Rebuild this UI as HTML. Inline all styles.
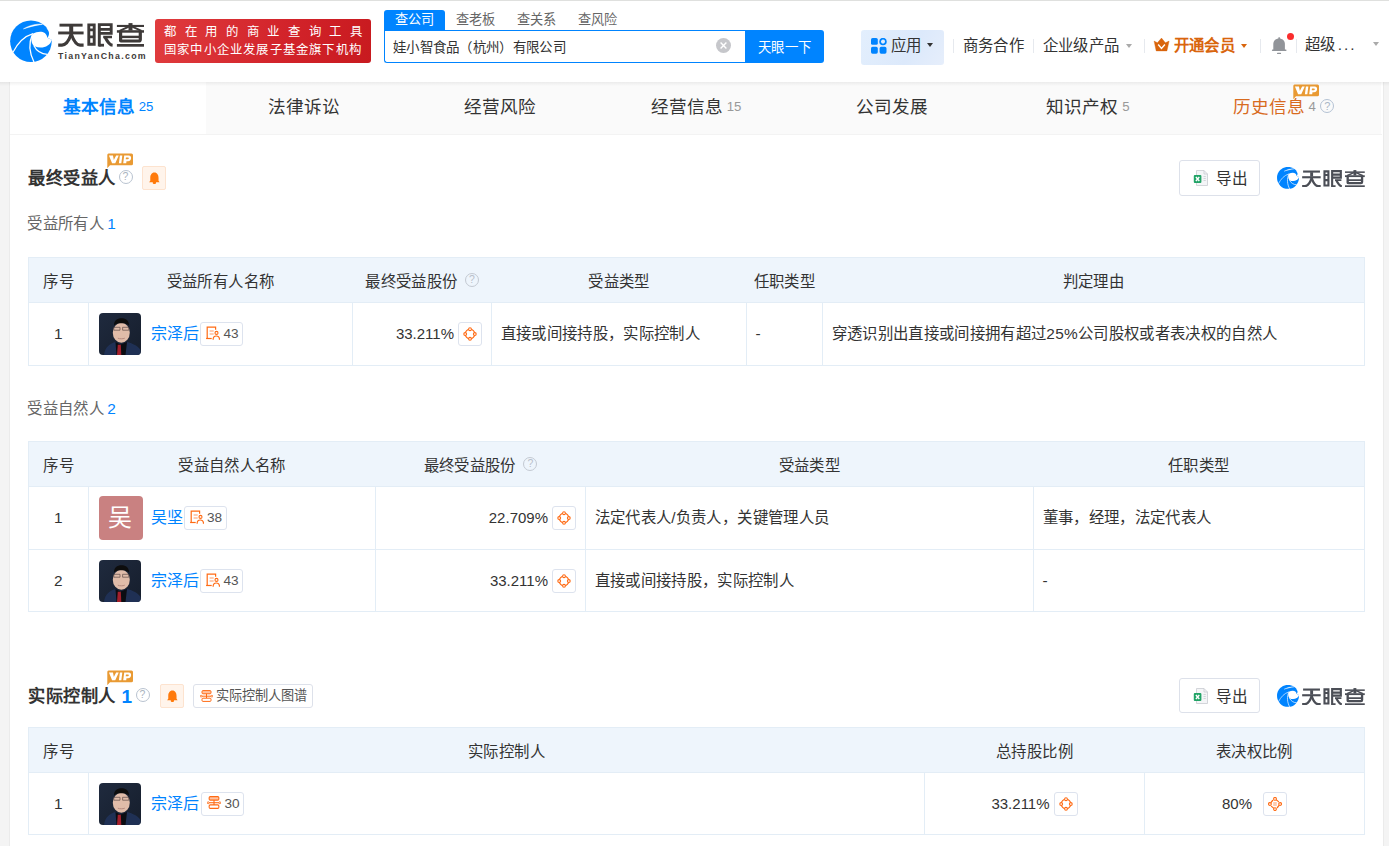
<!DOCTYPE html>
<html lang="zh-CN"><head><meta charset="utf-8">
<style>
*{box-sizing:border-box;margin:0;padding:0}
html,body{width:1389px;height:846px;overflow:hidden}
body{background:#f4f4f4;font-family:"Liberation Sans",sans-serif;color:#333;position:relative}
.abs{position:absolute}
#hdr{position:absolute;left:0;top:0;width:1389px;height:82px;background:#fff;box-shadow:inset 0 1px 0 #dfe0de}
#hshadow{position:absolute;left:0;top:82px;width:1389px;height:4px;z-index:5;background:linear-gradient(rgba(0,0,0,0.06),rgba(0,0,0,0))}
.banner{position:absolute;left:155px;top:19px;width:216px;height:44px;border-radius:3px;background:linear-gradient(100deg,#e03c3e,#d2232a 60%,#c81a1f);color:#fff;font-size:13.2px;line-height:18px}
.banner .l1{position:absolute;left:9px;top:3.5px;width:198px;text-align:justify;text-align-last:justify;white-space:nowrap;letter-spacing:0;font-size:12.4px;font-weight:500}
.banner .l2{position:absolute;left:9px;top:21.8px;width:210px;white-space:nowrap;font-size:12.4px;letter-spacing:1.2px}
.stabs{position:absolute;left:384px;top:10px;height:20px;font-size:13.2px;line-height:20px;color:#666}
.stabs > span{position:absolute;top:0;width:61px;text-align:center;white-space:nowrap}
.stabs .on{background:#0084ff;color:#fff;border-radius:3px 3px 0 0}
.sinput{position:absolute;left:384px;top:30px;width:362px;height:33px;border:1px solid #0084ff;border-radius:0 0 0 3px;border-right:none;background:#fff;font-size:13.5px;letter-spacing:0.3px;line-height:33px;padding-left:8px;color:#333}
.sbtn{position:absolute;left:745px;top:30px;width:79px;height:33px;background:#0084ff;border-radius:0 3px 3px 0;color:#fff;font-size:13.4px;letter-spacing:0.3px;line-height:35px;text-align:center}
.clr{position:absolute;left:716px;top:38px;width:15px;height:15px;border-radius:50%;background:#c6c7cb}
.nav{position:absolute;top:28px;height:35px;font-size:15.4px;letter-spacing:0.4px;line-height:35px;color:#333;white-space:nowrap}
.sep{position:absolute;top:39.3px;width:1px;height:13.5px;background:#e6e9ee}
.caret{position:absolute;width:0;height:0;border-left:3.5px solid transparent;border-right:3.5px solid transparent;border-top:4px solid #999}
#wrap{position:absolute;left:10px;top:82px;width:1373px;height:764px;background:#fff;box-shadow:-1px 0 0 #ebebeb,1px 0 0 #ebebeb}
.tab{position:absolute;top:0;width:196px;height:52px;background:#fafafa;text-align:center;font-size:17.6px;line-height:50px;color:#333;white-space:nowrap}
.tab.on{background:#fff;color:#0084ff;font-weight:bold}
.tab .n{font-size:13.2px;color:#999;font-weight:normal;margin-left:4px;vertical-align:2px}
.tab.on .n{color:#0084ff}
.tabline{position:absolute;left:0;top:52px;width:1372px;height:1px;background:#f3f3f3}
.title{position:absolute;letter-spacing:0.6px;font-size:17.2px;font-weight:bold;color:#333;line-height:24px;white-space:nowrap}
.sub{position:absolute;font-size:15.4px;letter-spacing:0.4px;color:#666;line-height:20px;white-space:nowrap}
.sub b{font-weight:normal;color:#0084ff}
.qm{position:absolute;width:14px;height:14px;border:1.2px solid #b9c3d0;border-radius:50%;font-size:10.5px;line-height:11.6px;text-align:center;color:#aab3c0}
.bellbtn{position:absolute;width:24px;height:24px;background:#fff4eb;border:1px solid #fde3cf;border-radius:2px}
.vip{position:absolute;width:26px;height:15px}
.export{position:absolute;left:1179px;width:81px;height:36px;border:1px solid #dde1ea;border-radius:3px;background:#fff;font-size:15.4px;line-height:34px;color:#333}
.export > span{position:absolute;left:35.5px;top:0.5px;font-size:15.6px}
.export svg{position:absolute;left:13px;top:9px}
.logo2{position:absolute;left:1276px;width:90px;height:24px}
table{position:absolute;left:28px;border-collapse:collapse;table-layout:fixed;font-size:15.4px;letter-spacing:0.34px;color:#333}
th{background:#eef5fc;font-weight:normal;height:45px;border-top:1px solid #e3edf6;border-bottom:1px solid #e3edf6;text-align:center;padding:0;white-space:nowrap}
th:first-child{border-left:1px solid #e3edf6}
th:last-child{border-right:1px solid #e3edf6}
td{border:1px solid #e3edf6;line-height:20px;padding:0 10px 0 8.5px;height:62px;white-space:nowrap;position:relative}
td.c{text-align:center;padding:0}
td.r{text-align:right;padding-right:9px}
.ava{margin-left:1.5px;display:inline-block;vertical-align:middle;width:42px;height:42px;border-radius:4px;overflow:hidden}
.ava svg{display:block}
.nm{color:#0084ff;vertical-align:middle;margin-left:10px;font-size:16px;letter-spacing:0}
.ava.w{margin-left:1px}
.ava.w+.nm{margin-left:8px}
.bdg{display:inline-block;vertical-align:middle;height:24px;border:1px solid #dde3ee;border-radius:3px;padding:0 3.5px 0 5px;font-size:13.6px;line-height:22px;color:#555;margin-left:1px;letter-spacing:0}
.bdg svg{vertical-align:-2px;margin-right:3.5px}
.ib{display:inline-block;vertical-align:middle;width:24px;height:24px;border:1px solid #dde3ee;border-radius:3px;margin-left:4px;position:relative}
.ib svg{position:absolute;left:4px;top:4px}
.jw{display:inline-block;white-space:nowrap;text-align:justify;text-align-last:justify;text-indent:0}
.pct{vertical-align:middle;font-size:15px;letter-spacing:0}
.qmi{display:inline-block;width:14px;height:14px;border:1.3px solid #c3c9d2;border-radius:50%;font-size:10.5px;line-height:11.5px;text-align:center;color:#b9c0ca;vertical-align:3.6px;margin-left:3px;letter-spacing:0}
</style></head>
<body>
<div id="hdr">
  <!-- logo icon -->
  <svg class="abs" style="left:6px;top:16.4px" width="50" height="50" viewBox="0 0 846 846">
    <defs><symbol id="lg" viewBox="0 0 846 846">
    <circle cx="422" cy="428" r="352" fill="#0084ff"></circle>
    <path d="M450 300 C550 250 680 245 700 368 C720 380 750 392 778 400 C740 520 610 560 482 512 C425 470 415 380 450 300 Z" fill="#fff"></path>
    <path d="M700 368 C740 320 740 255 685 210 L820 180 L820 400 L778 400 C750 392 720 380 700 368 Z" fill="#fff"></path>
    <path d="M118 615 C190 470 300 345 458 298" stroke="#fff" stroke-width="20" fill="none"></path>
    <path d="M445 318 C385 450 390 620 478 790" stroke="#fff" stroke-width="22" fill="none"></path>
    <path d="M470 500 C520 600 600 645 700 650" stroke="#fff" stroke-width="22" fill="none"></path>
    <path d="M295 218 C390 160 510 128 618 142 C520 150 400 185 295 218 Z" fill="#fff" stroke="#fff" stroke-width="8"></path>
    </symbol></defs>
    <use href="#lg" width="846" height="846"></use>
  </svg>
  <!-- logo text -->
  <svg class="abs" style="left:58px;top:23px" width="87" height="24" viewBox="58 23 87 24"><use href="#lt" x="58" y="23" width="87" height="24" style="color:#3e3a39"></use></svg>
  <div class="abs" style="left:58px;top:51px;width:90px;font-size:8.8px;font-weight:bold;color:#3e3a39;letter-spacing:1.3px;line-height:10px;white-space:nowrap">TianYanCha.com</div>
  <div class="banner"><div class="l1"><span class="jw" style="width: 198px;">都在用的商业查询工具</span></div><div class="l2"><span class="jw" style="width: 198px;">国家中小企业发展子基金旗下机构</span></div></div>
  <div class="stabs"><span class="on" style="left:0"><span class="jw" style="width: 39px;">查公司</span></span><span style="left:61px"><span class="jw" style="width: 39px;">查老板</span></span><span style="left:122px"><span class="jw" style="width: 39px;">查关系</span></span><span style="left:183px"><span class="jw" style="width: 39px;">查风险</span></span></div>
  <div class="sinput"><span class="jw" style="width: 172.91px;">娃小智食品（杭州）有限公司</span></div>
  <div class="clr"><svg width="15" height="15" viewBox="0 0 15 15"><path d="M4.6 4.6 L10.4 10.4 M10.4 4.6 L4.6 10.4" stroke="#fff" stroke-width="1.4"></path></svg></div>
  <div class="sbtn"><span class="jw" style="width: 53.2px;">天眼一下</span></div>
  <!-- right nav -->
  <div class="abs" style="left:861px;top:29.5px;width:83px;height:35px;border-radius:3px;background:linear-gradient(120deg,#e3effd,#dce9fb 60%,#e6eefb)"></div>
  <svg class="abs" style="left:870.5px;top:38px" width="16" height="16" viewBox="0 0 16 16">
    <rect x="0" y="0" width="6.8" height="6.8" rx="1.6" fill="#0084ff"></rect>
    <circle cx="12" cy="3.6" r="2.9" fill="none" stroke="#0084ff" stroke-width="1.7"></circle>
    <rect x="0" y="8.8" width="6.8" height="6.9" rx="1.6" fill="#0084ff"></rect>
    <rect x="8.6" y="8.8" width="6.9" height="6.9" rx="1.6" fill="#0084ff"></rect>
  </svg>
  <div class="nav" style="left:891px"><span class="jw" style="width: 30.81px;">应用</span></div>
  <div class="caret" style="left:927.3px;top:43.2px;border-top-color:#333"></div>
  <div class="sep" style="left:953px"></div>
  <div class="nav" style="left:962.5px"><span class="jw" style="width: 61.61px;">商务合作</span></div>
  <div class="sep" style="left:1033px"></div>
  <div class="nav" style="left:1042.5px"><span class="jw" style="width: 77px;">企业级产品</span></div>
  <div class="caret" style="left:1125.5px;top:44px;border-top-color:#aaa"></div>
  <div class="sep" style="left:1144px"></div>
  <svg class="abs" style="left:1153px;top:38px" width="17" height="14" viewBox="0 0 17 14">
    <path d="M1.1 3.1 L4.4 4.8 L8.5 0.1 L12.4 4.8 L16.1 3.1 L13.9 12.9 H3.2 Z" fill="#d9650d" stroke="#d9650d" stroke-width="0.4" stroke-linejoin="round"></path>
    <path d="M5.2 6.5 L8.5 10.5 L11.9 6.5" stroke="#fff" stroke-width="1.4" fill="none"></path>
  </svg>
  <div class="nav" style="left:1173.5px;color:#d9650d;font-weight:bold"><span class="jw" style="width: 61.61px;">开通会员</span></div>
  <div class="caret" style="left:1240.5px;top:44px;border-top-color:#d9650d"></div>
  <div class="sep" style="left:1260px"></div>
  <svg class="abs" style="left:1271px;top:37px" width="16" height="17" viewBox="0 0 16 17">
    <rect x="7.3" y="0.2" width="1.8" height="2" rx="0.6" fill="#919499"></rect>
    <path d="M2.3 13 V7 C2.3 3.7 4.9 1.6 8.1 1.6 C11.3 1.6 13.9 3.7 13.9 7 V13 Z" fill="#919499"></path>
    <rect x="0.9" y="12.6" width="14.6" height="1.3" rx="0.6" fill="#919499"></rect>
    <rect x="6" y="15.8" width="4.1" height="1.2" rx="0.6" fill="#919499"></rect>
  </svg>
  <div class="abs" style="left:1286.8px;top:32.6px;width:7.5px;height:7.5px;border-radius:50%;background:#fa2d2d"></div>
  <div class="sep" style="left:1296px"></div>
  <div class="nav" style="left:1305px;top:27px"><span class="jw" style="width: 30.81px;">超级</span><span style="letter-spacing:2px;margin-left:2px">...</span></div>
  <div class="caret" style="left:1373px;top:42px;border-top-color:#aaa"></div>
</div>
<div id="hshadow"></div>

<div id="wrap">
  <div class="tab on" style="left:0"><span class="jw" style="width: 72px;">基本信息</span><span class="n">25</span></div>
  <div class="tab" style="left:196px"><span class="jw" style="width: 72px;">法律诉讼</span></div>
  <div class="tab" style="left:392px"><span class="jw" style="width: 72px;">经营风险</span></div>
  <div class="tab" style="left:588px"><span class="jw" style="width: 72px;">经营信息</span><span class="n">15</span></div>
  <div class="tab" style="left:784px"><span class="jw" style="width: 72px;">公司发展</span></div>
  <div class="tab" style="left:980px"><span class="jw" style="width: 72px;">知识产权</span><span class="n">5</span></div>
  <div class="tab" style="left:1176px;width:195px;color:#d86b1f"><span class="jw" style="width: 72px;">历史信息</span><span class="n">4</span><span class="qmi" style="vertical-align:3px;margin-left:4.5px;width:14px;height:14px;line-height:12px;font-size:11px;border-color:#b4c2d4;color:#a9b6c6">?</span></div><svg class="vip" style="left:1283px;top:1.5px" width="27" height="15"><use href="#vip"></use></svg>
  <div class="tabline"></div>
</div>

<!-- Section 1 -->
<svg width="0" height="0" style="position:absolute">
  <defs>
    <symbol id="ph" viewBox="0 0 42 42">
      <rect width="42" height="42" fill="url(#phg)"></rect>
      <path d="M5 42 C6 34.5 10 31 16.5 29 L21.5 31 L28 29 C34 30.5 39 33 41.5 37 V42 Z" fill="#1f3054"></path>
      <path d="M16.5 29 L21.5 31.5 L28 29 L26.5 42 H17.5 Z" fill="#0b0d12"></path>
      <path d="M18.8 31.8 L21.8 31.8 L22.3 42 H18 Z" fill="#a41f2c"></path>
      <ellipse cx="22.3" cy="19.8" rx="8.5" ry="10" fill="#e0bca9"></ellipse>
      <path d="M15 12.5 C15 7.5 18 5.3 22.5 5.3 C27 5.3 30 7.5 30 12.5 C28.5 10.8 26 10.2 22.5 10.2 C19 10.2 16.5 10.8 15 12.5 Z" fill="#0d0d0d"></path>
      <path d="M14.8 14.3 H21 V17.2 H14.8 Z M23.6 14.3 H29.8 V17.2 H23.6 Z" fill="none" stroke="#5e4c48" stroke-width="0.7"></path>
      <path d="M18.8 25.2 C21 26 23.6 26 25.8 25.2" stroke="#b0857a" stroke-width="0.9" fill="none"></path>
    </symbol>
    <linearGradient id="phg" x1="0" y1="0" x2="1" y2="1"><stop offset="0" stop-color="#1f2a3e"></stop><stop offset="1" stop-color="#161e2c"></stop></linearGradient>
    <symbol id="pi" viewBox="0 0 14 14">
      <path d="M1.2 12.5 V1.1 H9.6 V3.7" stroke="#ff6a13" stroke-width="1.2" fill="none"></path>
      <path d="M0.1 12.5 H5.7" stroke="#ff6a13" stroke-width="1.2"></path>
      <path d="M3.6 5 H7.7 M3.6 8 H7.7" stroke="#ff9a66" stroke-width="1.1"></path>
      <circle cx="10.5" cy="6.9" r="1.5" fill="none" stroke="#ff6a13" stroke-width="1.1"></circle>
      <path d="M7.1 13.8 C7.1 10.9 8.6 10 10.3 10 C12.1 10 13.5 10.9 13.5 13.8" stroke="#ff6a13" stroke-width="1.2" fill="none"></path>
    </symbol>
    <symbol id="eq" viewBox="0 0 14 14">
      <circle cx="7" cy="7" r="4.8" fill="none" stroke="#ff6a13" stroke-width="1.2"></circle>
      <circle cx="7" cy="2.2" r="1.4" fill="#fff" stroke="#ff6a13" stroke-width="1.1"></circle>
      <circle cx="11.8" cy="7" r="1.4" fill="#fff" stroke="#ff6a13" stroke-width="1.1"></circle>
      <circle cx="7" cy="11.8" r="1.4" fill="#fff" stroke="#ff6a13" stroke-width="1.1"></circle>
      <circle cx="2.2" cy="7" r="1.4" fill="#fff" stroke="#ff6a13" stroke-width="1.1"></circle>
    </symbol>
    <symbol id="vt" viewBox="0 0 14 14">
      <path d="M8.4 2.9 L10.5 4.6 M11.1 8.4 L9.4 10.5 M5.6 11.1 L3.5 9.4 M2.9 5.6 L4.6 3.5" stroke="#ff6a13" stroke-width="1.2" stroke-linecap="round"></path>
      <circle cx="7" cy="1.9" r="1.4" fill="#fff" stroke="#ff6a13" stroke-width="1.1"></circle>
      <circle cx="12.1" cy="7" r="1.4" fill="#fff" stroke="#ff6a13" stroke-width="1.1"></circle>
      <circle cx="7" cy="12.1" r="1.4" fill="#fff" stroke="#ff6a13" stroke-width="1.1"></circle>
      <circle cx="1.9" cy="7" r="1.4" fill="#fff" stroke="#ff6a13" stroke-width="1.1"></circle>
      <path d="M5.2 6 H8.8 M5.2 8 H8.8" stroke="#ff8a4c" stroke-width="0.9"></path>
    </symbol>
    <symbol id="tp" viewBox="0 0 13 12">
      <rect x="2" y="0.6" width="9" height="3.2" rx="1" fill="#ffc2a0" stroke="#ff6a13" stroke-width="1"></rect>
      <path d="M6.5 3.8 V8.2" stroke="#ff6a13" stroke-width="1"></path>
      <path d="M1.9 6.2 H11.1" stroke="#ff6a13" stroke-width="1"></path>
      <circle cx="1.1" cy="6.2" r="0.9" fill="#fff" stroke="#ff6a13" stroke-width="0.8"></circle>
      <circle cx="11.9" cy="6.2" r="0.9" fill="#fff" stroke="#ff6a13" stroke-width="0.8"></circle>
      <rect x="2" y="8.2" width="9" height="3.2" rx="1" fill="#fff" stroke="#ff6a13" stroke-width="1"></rect>
    </symbol>
    <symbol id="bell" viewBox="0 0 12 13">
      <path d="M6 0.6 C9.2 0.6 10.6 3.3 10.6 6.4 V9.3 L11.9 10.9 H0.1 L1.4 9.3 V6.4 C1.4 3.3 2.8 0.6 6 0.6 Z" fill="#ff7a0b"></path>
      <ellipse cx="6" cy="11.4" rx="1.9" ry="1.5" fill="#ff7a0b"></ellipse>
    </symbol>
    <symbol id="vip" viewBox="0 0 26 15">
      <path d="M1.5 0.5 H24.5 Q26 0.5 26 2 V10.7 Q26 12.2 24.5 12.2 H3 L0.3 15.2 V2 Q0.3 0.5 1.5 0.5 Z" fill="#e99a33"></path>
      <path d="M1.93 2.42 H5.97 L6.83 7.03 L9.14 2.42 H11.73 L8.27 10.2 H5.1 Z M12.88 2.42 H15.33 L14.33 10.2 H11.88 Z" fill="#fff"></path>
      <path fill-rule="evenodd" d="M17.2 2.42 H21.8 Q24.1 2.42 24.1 5.1 Q24.1 8.2 21 8.2 H19.5 L19.2 10.2 H16.2 Z M19 4.4 H21 Q21.8 4.4 21.8 5.3 Q21.8 6.3 20.8 6.3 H18.7 Z" fill="#fff"></path>
    </symbol>
    <symbol id="xls" viewBox="0 0 15 16">
      <path d="M3.5 0.5 H11 L14.5 4 V15.5 H3.5 Z" fill="#f4f5f7" stroke="#c9ccd2" stroke-width="0.8"></path>
      <path d="M11 0.5 V4 H14.5" fill="none" stroke="#c9ccd2" stroke-width="0.8"></path>
      <path d="M10.5 6.5 H12.8 M10.5 8.5 H12.8 M10.5 10.5 H12.8" stroke="#c9ccd2" stroke-width="0.8"></path>
      <rect x="0.8" y="5" width="7.6" height="8" rx="1" fill="#21a366"></rect>
      <path d="M2.9 7 L6.3 11 M6.3 7 L2.9 11" stroke="#fff" stroke-width="1.4"></path>
    </symbol>
    <symbol id="lt" viewBox="58 23 87 24">
      <g fill="currentColor">
      <rect x="59.5" y="23.7" width="23.1" height="2.9"></rect>
      <rect x="69.2" y="26" width="4" height="6"></rect>
      <rect x="58.2" y="31.5" width="25.4" height="2.9"></rect>
      <rect x="116.9" y="24.9" width="27.1" height="2.1"></rect>
      <rect x="128.5" y="23.1" width="4" height="7.4"></rect>
      <rect x="116.9" y="30.2" width="27.1" height="2.5"></rect>
      <rect x="121" y="35.7" width="19" height="2.4"></rect>
      <rect x="116.9" y="44" width="27.1" height="2.7"></rect>
      </g>
      <g stroke="currentColor" fill="none">
      <path d="M71.2 34 C69.5 39 66.5 45 62 45.1 L58.2 45.1" stroke-width="3.2"></path>
      <path d="M71.2 34 C73 39 76 45 80 45.1 L83.6 45.1" stroke-width="3.2"></path>
      <path d="M88.8 24.9 H94.2 V44.3 H88.8 Z M88.8 29.9 H94.2 M88.8 36.9 H94.2" stroke-width="2.9"></path>
      <path d="M99.3 46.6 V24.6 H111.2 V33.4 H99.3 M99.3 29.4 H111.2" stroke-width="2.9"></path>
      <path d="M99 45.2 H104" stroke-width="2.8"></path>
      <path d="M103.2 37 H112" stroke-width="2.5"></path>
      <path d="M105 37 C107 41 109 45 112.6 45.3" stroke-width="3.1"></path>
      <path d="M130.5 25.8 L119.6 30.9 M130.5 25.8 L141.5 30.9" stroke-width="2"></path>
      <path d="M120.6 31.6 V40.8 Q120.6 41 122.1 41 H138.8 Q140.3 41 140.3 39.5 V31.6" stroke-width="3.2"></path>
      </g>
    </symbol>
  </defs>
</svg>

<svg class="vip" style="left:107px;top:152.5px" width="26" height="15"><use href="#vip"></use></svg>
<div class="title" style="left:28px;top:166px"><span class="jw" style="width: 88px;">最终受益人</span></div>
<div class="qm" style="left:118.5px;top:170.2px">?</div>
<div class="bellbtn" style="left:142px;top:166px"><svg style="position:absolute;left:5.8px;top:5.2px" width="10.8" height="12.2" viewBox="0 0 12 13" preserveAspectRatio="none"><use href="#bell"></use></svg></div>
<div class="export" style="top:160px"><svg width="15" height="16"><use href="#xls"></use></svg><span><span class="jw" style="width: 32px;">导出</span></span></div>
<svg class="abs" style="left:1276.7px;top:167px" width="22" height="22" viewBox="70 80 705 705"><use href="#lg" width="846" height="846"></use></svg>
<svg class="abs" style="left:1301.5px;top:169.5px;color:#4b4e56" width="63.5" height="17.5" viewBox="58 23 87 24" preserveAspectRatio="none"><use href="#lt" x="58" y="23" width="87" height="24"></use></svg>

<div class="sub" style="left:27.3px;top:214px"><span class="jw" style="width: 77px;">受益所有人</span><b style="margin-left:3px">1</b></div>

<table style="top:257px;width:1337px">
<colgroup><col style="width:60px"><col style="width:264px"><col style="width:139px"><col style="width:255px"><col style="width:76px"><col style="width:542px"></colgroup>
<tbody><tr><th><span class="jw" style="width: 30.69px;">序号</span></th><th><span class="jw" style="width: 107.39px;">受益所有人名称</span></th><th><span class="jw" style="width: 92.05px;">最终受益股份</span><span class="qmi" style="margin-left:7.6px">?</span></th><th><span class="jw" style="width: 61.38px;">受益类型</span></th><th><span class="jw" style="width: 61.38px;">任职类型</span></th><th><span class="jw" style="width: 61.38px;">判定理由</span></th></tr>
<tr style="height:63px"><td class="c" style="height:63px">1</td><td><span class="ava"><svg width="42" height="42"><use href="#ph"></use></svg></span><span class="nm"><span class="jw" style="width: 48px;">宗泽后</span></span><span class="bdg"><svg width="14" height="14"><use href="#pi"></use></svg>43</span></td><td class="r"><span class="pct">33.211%</span><span class="ib"><svg width="14" height="14"><use href="#eq"></use></svg></span></td><td><span class="jw" style="width: 199.42px;">直接或间接持股，实际控制人</span></td><td>-</td><td><span class="jw" style="width: 446.02px;">穿透识别出直接或间接拥有超过25%公司股权或者表决权的自然人</span></td></tr>
</tbody></table>

<div class="sub" style="left:27.3px;top:398.5px"><span class="jw" style="width: 77px;">受益自然人</span><b style="margin-left:3px">2</b></div>

<table style="top:441px;width:1337px">
<colgroup><col style="width:60px"><col style="width:287px"><col style="width:210px"><col style="width:448px"><col style="width:331px"></colgroup>
<tbody><tr><th><span class="jw" style="width: 30.69px;">序号</span></th><th><span class="jw" style="width: 107.39px;">受益自然人名称</span></th><th><span class="jw" style="width: 92.05px;">最终受益股份</span><span class="qmi" style="margin-left:7.6px">?</span></th><th><span class="jw" style="width: 61.38px;">受益类型</span></th><th><span class="jw" style="width: 61.38px;">任职类型</span></th></tr>
<tr style="height:63px"><td class="c" style="height:63px">1</td><td><span class="ava w" style="width:44px;height:44px;background:#c98181;color:#fff;font-size:24px;line-height:44px;text-align:center"><span class="jw" style="width: 24.34px;">吴</span></span><span class="nm"><span class="jw" style="width: 32px;">吴坚</span></span><span class="bdg"><svg width="14" height="14"><use href="#pi"></use></svg>38</span></td><td class="r"><span class="pct">22.709%</span><span class="ib"><svg width="14" height="14"><use href="#eq"></use></svg></span></td><td><span class="jw" style="width: 234.72px;">法定代表人/负责人，关键管理人员</span></td><td><span class="jw" style="width: 168.75px;">董事，经理，法定代表人</span></td></tr>
<tr><td class="c">2</td><td><span class="ava"><svg width="42" height="42"><use href="#ph"></use></svg></span><span class="nm"><span class="jw" style="width: 48px;">宗泽后</span></span><span class="bdg"><svg width="14" height="14"><use href="#pi"></use></svg>43</span></td><td class="r"><span class="pct">33.211%</span><span class="ib"><svg width="14" height="14"><use href="#eq"></use></svg></span></td><td><span class="jw" style="width: 199.42px;">直接或间接持股，实际控制人</span></td><td>-</td></tr>
</tbody></table>

<!-- Section 2 -->
<svg class="vip" style="left:107px;top:669.5px" width="26" height="15"><use href="#vip"></use></svg>
<div class="title" style="left:28px;top:684px"><span class="jw" style="width: 88px;">实际控制人</span><span style="color:#0084ff;font-size:19px;margin-left:5.5px;vertical-align:-1px">1</span></div>
<div class="qm" style="left:135.5px;top:688px">?</div>
<div class="bellbtn" style="left:160px;top:684px"><svg style="position:absolute;left:5.8px;top:5.2px" width="10.8" height="12.2" viewBox="0 0 12 13" preserveAspectRatio="none"><use href="#bell"></use></svg></div>
<div class="abs" style="left:193px;top:684px;width:120px;height:24px;border:1px solid #dde1ea;border-radius:3px;font-size:13.2px;line-height:22px;color:#555;white-space:nowrap"><svg style="position:absolute;left:5.5px;top:4.5px" width="13" height="12"><use href="#tp"></use></svg><span style="position:absolute;left:22px;top:0"><span class="jw" style="width: 91px;">实际控制人图谱</span></span></div>
<div class="export" style="top:678px;height:35px;line-height:33px"><svg width="15" height="16"><use href="#xls"></use></svg><span><span class="jw" style="width: 32px;">导出</span></span></div>
<svg class="abs" style="left:1276.7px;top:685px" width="22" height="22" viewBox="70 80 705 705"><use href="#lg" width="846" height="846"></use></svg>
<svg class="abs" style="left:1301.5px;top:687.5px;color:#4b4e56" width="63.5" height="17.5" viewBox="58 23 87 24" preserveAspectRatio="none"><use href="#lt" x="58" y="23" width="87" height="24"></use></svg>

<table style="top:727px;width:1337px">
<colgroup><col style="width:60px"><col style="width:836px"><col style="width:220px"><col style="width:220px"></colgroup>
<tbody><tr><th><span class="jw" style="width: 30.69px;">序号</span></th><th><span class="jw" style="width: 76.7px;">实际控制人</span></th><th><span class="jw" style="width: 76.7px;">总持股比例</span></th><th><span class="jw" style="width: 76.7px;">表决权比例</span></th></tr>
<tr><td class="c">1</td><td><span class="ava"><svg width="42" height="42"><use href="#ph"></use></svg></span><span class="nm"><span class="jw" style="width: 48px;">宗泽后</span></span><span class="bdg" style="margin-left:2px"><svg width="14" height="13" style="vertical-align:-1.5px" viewBox="0 0 13 12" preserveAspectRatio="none"><use href="#tp"></use></svg>30</span></td><td class="c"><span class="pct">33.211%</span><span class="ib"><svg width="14" height="14"><use href="#eq"></use></svg></span></td><td class="c"><span class="pct">80%</span><span class="ib" style="margin-left:11px"><svg width="14" height="14"><use href="#vt"></use></svg></span></td></tr>
</tbody></table>

</body></html>
